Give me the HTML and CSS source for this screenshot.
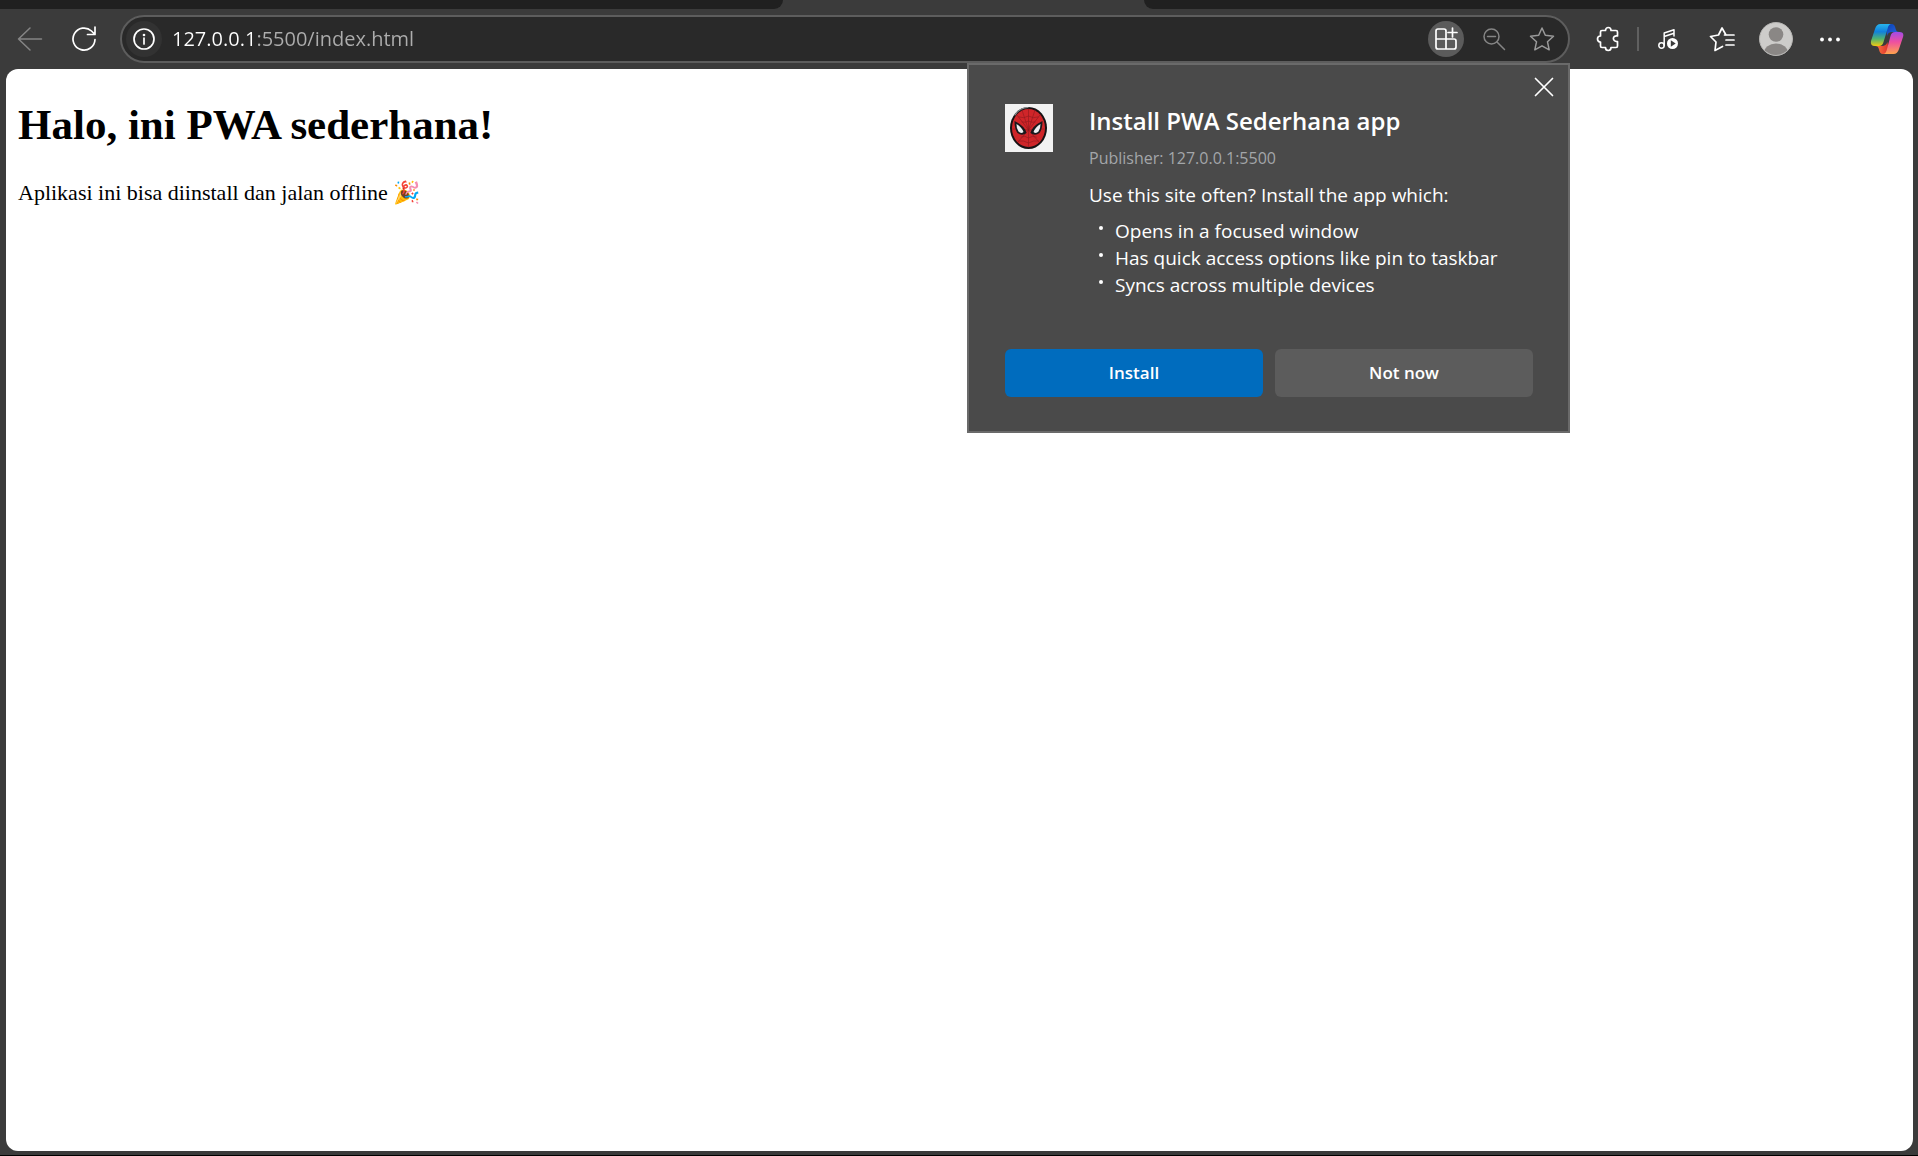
FILE: index.html
```html
<!DOCTYPE html>
<html lang="id">
<head>
<meta charset="utf-8">
<meta name="viewport" content="width=device-width, initial-scale=1">
<title>PWA Sederhana</title>
<link rel="stylesheet" href="styles.css">
</head>
<body>
<div class="browser">
  <div class="tabstrip">
    <div class="tabs-before"></div>
    <div class="tab-active"></div>
    <div class="tabs-after"></div>
  </div>

  <header class="toolbar">
    <button class="tool dim" aria-label="Back">
      <svg width="26" height="26" viewBox="0 0 26 26"><path d="M24.500 13H1.500M13 2 1.500 13 13 24"/></svg>
    </button>
    <button class="tool" aria-label="Refresh">
      <svg width="26" height="26" viewBox="0 0 26 26"><path class="bold" d="M24 13.500A11 11 0 1 1 20.500 5L23.500 8M24 1V8.500H16.500"/></svg>
    </button>

    <div class="address">
      <button class="round info" aria-label="View site information">
        <svg width="22" height="22" viewBox="0 0 22 22"><circle class="bold" cx="11" cy="11" r="10"/><path class="bold" d="M11 10v6"/><circle class="solid" cx="11" cy="7" r="1.300"/></svg>
      </button>
      <input class="url" type="text" value="127.0.0.1:5500/index.html" aria-label="Address" spellcheck="false">
      <div class="address-actions">
        <button class="round app" aria-label="App available">
          <svg width="24" height="24" viewBox="0 0 24 24"><path class="bold" d="M12 22V4Q12 2 10 2H4Q2 2 2 4V20Q2 22 4 22H20Q22 22 22 20V14Q22 12 20 12H2M18.500 1v9M14 5.500h9"/></svg>
        </button>
        <button class="round dim" aria-label="Zoom">
          <svg width="24" height="24" viewBox="0 0 24 24"><circle cx="9.500" cy="9.500" r="7.500"/><path d="M15 15 22.500 22.500M5.500 9.500h8"/></svg>
        </button>
        <button class="round muted" aria-label="Add this page to favorites">
          <svg width="26" height="26" viewBox="0 0 26 26"><path d="M13 2 16.300 9.300 24.500 10.200 18.500 15.800 20.200 23.800 13 19.800 5.800 23.800 7.500 15.800 1.500 10.200 9.700 9.300Z"/></svg>
        </button>
      </div>

      <section class="popup" role="dialog" aria-labelledby="install-title">
        <button class="close" aria-label="Close">
          <svg width="20" height="20" viewBox="0 0 20 20"><path class="bold" d="M1.500 1.500 18.500 18.500M18.500 1.500 1.500 18.500"/></svg>
        </button>
        <div class="popup-main">
          <svg class="app-icon" viewBox="0 0 48 48" role="img" aria-label="PWA Sederhana">
            <rect width="48" height="48" fill="#f2f2f2"/>
            <ellipse cx="23.500" cy="24" rx="18.500" ry="21" fill="#171214"/>
            <path d="M10 11Q15 3.500 23 3.500" fill="none" stroke="#8a8d90" stroke-width="1.200"/>
            <ellipse cx="23.500" cy="24" rx="16.500" ry="19" fill="#cf2529"/>
            <g fill="none" stroke="#8d1a1f" stroke-width="0.600">
              <path d="M23.500 5v38M23.500 26 12 11M23.500 26 35 11M23.500 26 17 6M23.500 26 30 6M23.500 26 8 25M23.500 26 39 25M23.500 26 13 38M23.500 26 34 38"/>
              <path d="M14 13Q19 15 23.500 12 28 15 33 13M17 18q4 1 6.500-1 3 2 6.500 1M16 33q4-2 7.500 1 4-3 8-1M13 37q6-1 10.500 2 5-3 10-2"/>
            </g>
            <path d="M9.500 17Q20 22 21.500 29 17 32.500 12.500 29 9.500 25 9.500 17ZM37.500 17Q27 22 25.500 29 30 32.500 34.500 29 37.500 25 37.500 17Z" fill="#19191c"/>
            <path d="M11.500 20Q17 23.500 18.500 28 16 30 13.500 27.500 11.500 25 11.500 20ZM35.500 20Q30 23.500 28.500 28 31 30 33.500 27.500 35.500 25 35.500 20Z" fill="#edf0f2"/>
          </svg>
          <div class="popup-text">
            <h2 id="install-title">Install PWA Sederhana app</h2>
            <p class="publisher">Publisher: 127.0.0.1:5500</p>
            <p class="lead">Use this site often? Install the app which:</p>
            <ul>
              <li>Opens in a focused window</li>
              <li>Has quick access options like pin to taskbar</li>
              <li>Syncs across multiple devices</li>
            </ul>
          </div>
        </div>
        <div class="popup-actions">
          <button class="primary">Install</button>
          <button class="secondary">Not now</button>
        </div>
      </section>
    </div>

    <nav class="tools" aria-label="Browser tools">
      <button class="tool" aria-label="Extensions">
        <svg width="24" height="26" viewBox="0 0 24 26"><path class="bold" d="M6 4.500H9.500C9.500 .500 15 .500 15 4.500H20Q21.500 4.500 21.500 6V10C16 9 16 16 21.500 15.500V20Q21.500 21.500 20 21.500H15C15 25.500 9.500 25.500 9.500 21.500H6Q4.500 21.500 4.500 20V16C.500 16 .500 10 4.500 10V6Q4.500 4.500 6 4.500Z"/></svg>
      </button>
      <span class="divider"></span>
      <button class="tool" aria-label="Media controls">
        <svg width="22" height="22" viewBox="0 0 22 22"><circle cx="4.500" cy="17.500" r="2.700"/><path d="M7.200 17.500V5L17 1.700V8M7.200 8.500 17 5.300"/><circle class="solid" cx="15.500" cy="15.500" r="5.500"/><path fill="#3b3b3b" stroke="none" d="M13.800 12.300V18.700L18.700 15.500Z"/></svg>
      </button>
      <button class="tool" aria-label="Favorites">
        <svg width="26" height="26" viewBox="0 0 26 26"><path class="bold" d="M17 9 13 2 9.500 9 1.500 10.500 7 16 6 24.500 13.500 20.500M15.500 9H25M17 14H25M17 19H25"/></svg>
      </button>
      <button class="tool" aria-label="Profile">
        <svg width="34" height="34" viewBox="0 0 34 34"><defs><clipPath id="face"><circle cx="17" cy="17" r="16"/></clipPath></defs><circle cx="17" cy="17" r="16.500" fill="#cdccca" stroke="#b5b4b2" stroke-width="1"/><g fill="#8a8785" stroke="none" clip-path="url(#face)"><circle cx="17" cy="12.500" r="7.300"/><ellipse cx="17" cy="31" rx="12" ry="9.500"/></g></svg>
      </button>
      <button class="tool" aria-label="Settings and more">
        <svg width="22" height="22" viewBox="0 0 22 22"><g class="solid"><circle cx="3" cy="11.500" r="1.900"/><circle cx="11" cy="11.500" r="1.900"/><circle cx="19" cy="11.500" r="1.900"/></g></svg>
      </button>
      <button class="tool copilot" aria-label="Copilot">
        <svg width="34" height="32" viewBox="0 0 34 32">
          <defs>
            <linearGradient id="cool" x1="0" y1="0" x2="0" y2="1"><stop offset="0" stop-color="#28b5ee"/><stop offset=".35" stop-color="#1180dc"/><stop offset=".68" stop-color="#52b46e"/><stop offset="1" stop-color="#f2ca10"/></linearGradient>
            <linearGradient id="warm" x1="0" y1="0" x2="0" y2="1"><stop offset="0" stop-color="#a14be8"/><stop offset=".45" stop-color="#ee4fa0"/><stop offset="1" stop-color="#ffa34d"/></linearGradient>
            <linearGradient id="blue" x1="0" y1="0" x2="1" y2="1"><stop offset="0" stop-color="#0a3fb0"/><stop offset="1" stop-color="#2a6be8"/></linearGradient>
            <linearGradient id="red" x1="0" y1="0" x2="1" y2="0"><stop offset="0" stop-color="#ff7a3c"/><stop offset="1" stop-color="#dc3030"/></linearGradient>
          </defs>
          <g stroke="none">
            <path fill="url(#blue)" d="M16 1H21.500C24 1 25 3 25.500 5.500 26 8 27 9 29.500 9H22Q18 9 17 13Z"/>
            <path fill="url(#red)" d="M19 31H13C10.500 31 9.500 29 9 26.500 8.500 24 7.500 23 5 23H12Q16 23 17.500 19Z"/>
            <path fill="url(#cool)" d="M21.500 1H10.500Q6.500 1 5 6L1 18Q0 23 5 23H9Q12.500 23 13.500 19L17.500 6Q18.500 1 21.500 1Z"/>
            <path fill="url(#warm)" d="M13 31H23.500Q27.500 31 29 26L33 14Q34.500 9 29.500 9H25Q21.500 9 20.500 13L17 26Q16 31 13 31Z"/>
          </g>
        </svg>
      </button>
    </nav>
  </header>

  <main class="page">
    <h1>Halo, ini PWA sederhana!</h1>
    <p>Aplikasi ini bisa diinstall dan jalan offline 🎉</p>
  </main>
</div>
</body>
</html>
```
FILE: styles.css
```css
* { box-sizing: border-box; }

body {
  margin: 0;
  background: #000;
  font-family: "Open Sans", "Noto Sans", sans-serif;
}

.browser {
  display: flex;
  flex-direction: column;
  height: calc(100vh - 1px);
  background: #3b3b3b;
}

button {
  border: 0;
  padding: 0;
  background: none;
  color: #fff;
  font-family: inherit;
}

svg { display: block; fill: none; stroke: currentColor; stroke-width: 1.5; stroke-linecap: round; stroke-linejoin: round; }
.bold { stroke-width: 1.7; }
.solid { fill: currentColor; stroke: none; }

/* Tab strip */
.tabstrip { display: flex; height: 9px; }
.tabs-before, .tabs-after { background: #202020; }
.tabs-before { width: 783px; border-bottom-right-radius: 9px; }
.tab-active { width: 361px; }
.tabs-after { flex: 1; border-bottom-left-radius: 9px; }

/* Toolbar */
.toolbar {
  display: flex;
  align-items: center;
  height: 60px;
  padding: 0 1px 0 3px;
}
.tool {
  display: grid;
  place-items: center;
  width: 54px;
  height: 48px;
}
.copilot { width: 60px; }
.dim { color: #858585; }
.muted { color: #9a9a9a; }
.tools { display: flex; align-items: center; margin-left: 11px; }
.divider { width: 2px; height: 24px; margin: 0 2px; background: #606060; }

/* Address bar */
.address {
  position: relative;
  flex: 1;
  display: flex;
  align-items: center;
  height: 48px;
  margin-left: 9px;
  padding: 0 8px 0 4px;
  border: 2px solid #5d5d5d;
  border-radius: 24px;
  background: #292929;
}
.round {
  display: grid;
  place-items: center;
  width: 36px;
  height: 36px;
  border-radius: 50%;
}
.info { background: #323232; }
.app { background: #5b5b5b; }
.url {
  flex: 1;
  min-width: 0;
  margin-left: 10px;
  padding: 0;
  border: 0;
  outline: 0;
  background: linear-gradient(90deg, #fff 85px, #adadad 85px);
  -webkit-background-clip: text;
  background-clip: text;
  color: transparent;
  font: 20px/28px "Open Sans", "Noto Sans", sans-serif;
}
.address-actions { display: flex; gap: 12px; }

/* Install prompt */
.popup {
  position: absolute;
  z-index: 1;
  top: 46px;
  right: -2px;
  width: 603px;
  padding: 39px 35px 34px 36px;
  border: 2px solid #6a6a6a;
  background: #4a4a4a;
  color: #fff;
}
.close {
  position: absolute;
  top: 4px;
  right: 6px;
  display: grid;
  place-items: center;
  width: 36px;
  height: 36px;
}
.popup-main { display: flex; gap: 36px; }
.app-icon { flex: none; width: 48px; height: 48px; stroke: none; }
.popup-text { flex: 1; }
.popup h2 { margin: 0; font-size: 24px; font-weight: 600; line-height: 34px; }
.popup p, .popup li { font-size: 19px; line-height: 27px; }
.popup p { margin: 0; }
.popup .publisher { margin-top: 7px; color: #a3a6a9; font-size: 16px; }
.popup .lead { margin-top: 10px; }
.popup ul { margin: 9px 0 0; padding: 0; list-style: none; }
.popup li { display: flex; align-items: center; }
.popup li::before {
  content: "";
  width: 4px;
  height: 4px;
  margin: 0 12px 8px 10px;
  border-radius: 50%;
  background: #fff;
}
.popup-actions { display: flex; gap: 12px; margin-top: 50px; }
.popup-actions button {
  flex: 1;
  height: 48px;
  padding-bottom: 2px;
  border-radius: 6px;
  font-size: 17px;
  font-weight: 600;
}
.primary { background: #006cbe; }
.secondary { background: #5c5c5c; }

/* Page */
.page {
  flex: 1;
  margin: 0 5px 4px 6px;
  padding: 31px 12px;
  border-radius: 12px;
  background: #fff;
  color: #000;
  font-family: "Liberation Serif", serif;
}
.page h1 { margin: 0; font-size: 43px; line-height: 50px; }
.page p { margin: 30px 0 0; font-size: 22px; line-height: 26px; }
```
